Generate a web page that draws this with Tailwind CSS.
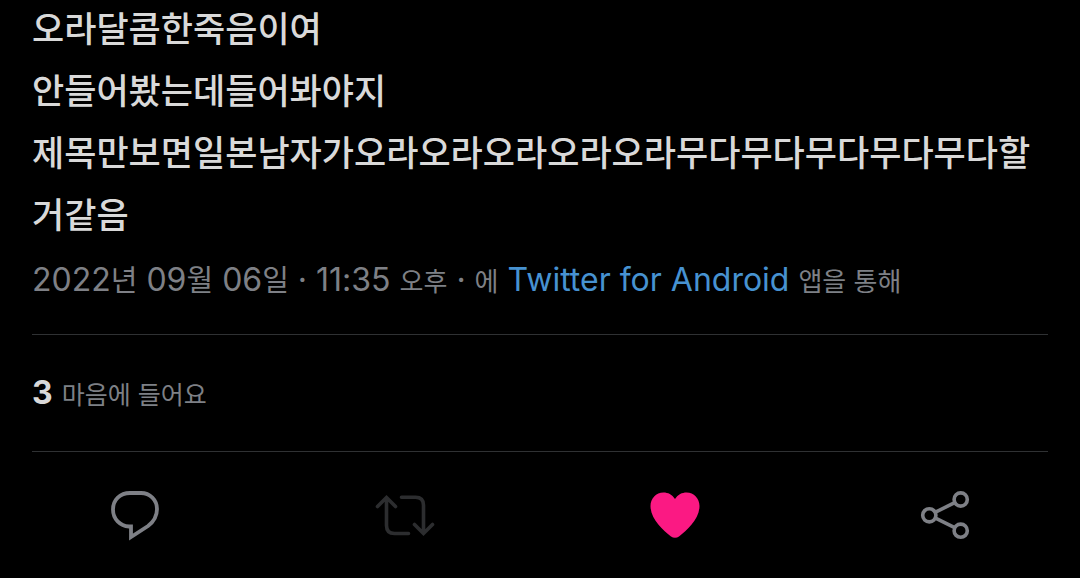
<!DOCTYPE html>
<html lang="ko">
<head>
    <meta charset="UTF-8">
    <meta name="viewport" content="width=device-width, initial-scale=1.0">
    <title>Tweet</title>
    <script src="https://cdn.jsdelivr.net/npm/@tailwindcss/browser@4"></script>
</head>
<body class="bg-black text-[#d9d9d9] font-['Inter','Noto_Sans_CJK_KR',sans-serif] overflow-x-hidden">

    <article class="flow-root">
        <div class="-mt-1 px-8">
            <div class="text-[35px] leading-[62px] font-medium break-all font-['Noto_Sans_CJK_KR',sans-serif]">
                <p>오라달콤한죽음이여</p>
                <p>안들어봤는데들어봐야지</p>
                <p>제목만보면일본남자가오라오라오라오라오라무다무다무다무다무다할거같음</p>
            </div>

            <p class="mt-2.5 pb-7 text-[32px] leading-[52px] text-[#7e8086]">
                2022<span class="text-[29px] leading-none">년</span> 09<span class="text-[29px] leading-none">월</span> 06<span class="text-[29px] leading-none">일</span> · 11:35 <span class="text-[26px] leading-none">오후</span> · <span class="text-[26px] leading-none">에</span>
                <a href="#" class="text-[#4792d1]">Twitter for Android</a>
                <span class="text-[26px] leading-none">앱을 통해</span>
            </p>

            <p class="border-y border-[#2f3133] py-8 text-[32px] leading-[52px] text-[#7e8086]">
                <span class="font-bold text-[#d9d9d9]">3</span>
                <span class="text-[25px] leading-none">마음에 들어요</span>
            </p>
        </div>

        <div class="grid grid-cols-4 justify-items-center pt-[33px] pb-8">
            <button type="button" aria-label="답글" class="text-[#7e8086]">
                <svg class="block size-[60px]" viewBox="0 0 60 60" fill="none" stroke="currentColor" stroke-width="3.8">
                    <path d="M25 8H36C45 8 52 15 52 24C52 30.500 49 36.500 43 41L26 52V41.500H24C15 41 8 34 8 24.500C8 15 15 8 25 8Z"/>
                </svg>
            </button>
            <button type="button" aria-label="리트윗" class="text-[#2c2d2f]">
                <svg class="block size-[60px]" viewBox="0 0 60 60" fill="none" stroke="currentColor" stroke-width="3.6" stroke-linecap="round">
                    <path d="M2.500 21.500L11.500 12.500L20.500 21.500M11.500 13V40.500Q11.500 48.500 19.500 48.500H33.500"/>
                    <path d="M26.500 12.300H40.500Q48.500 12.300 48.500 20.300V48M39.500 39.500L48.500 48.500L57.500 39.500"/>
                </svg>
            </button>
            <button type="button" aria-label="마음에 들어요" class="text-[#fb1983]">
                <svg class="block size-[60px]" viewBox="0 0 60 60" fill="currentColor">
                    <path d="M30 14C33 9.500 37 7.500 41.500 7.500C49 7.500 54.500 13.500 54.500 21C54.500 34 42 45 34 51.500C31.500 53.300 28.500 53.300 26 51.500C18 45 5.500 34 5.500 21C5.500 13.500 11 7.500 18.500 7.500C23 7.500 27 9.500 30 14Z"/>
                </svg>
            </button>
            <button type="button" aria-label="공유" class="text-[#7e8086]">
                <svg class="block size-[60px]" viewBox="0 0 60 60" fill="none" stroke="currentColor" stroke-width="3.6">
                    <circle cx="14.300" cy="30.300" r="6.600"/>
                    <circle cx="45.700" cy="14.500" r="6.600"/>
                    <circle cx="45.700" cy="45.700" r="6.600"/>
                    <path d="M20.500 27.200L39.700 17.600M20.500 33.200L39.700 42.700"/>
                </svg>
            </button>
        </div>
    </article>

</body>
</html>
